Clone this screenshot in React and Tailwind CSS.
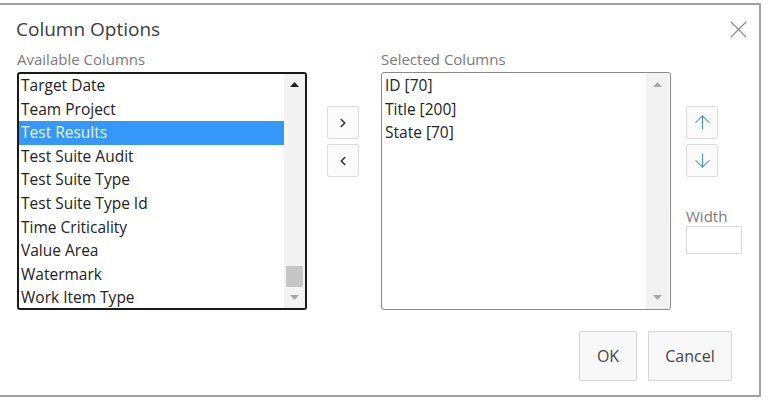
import { ChevronRight, ChevronLeft, ArrowUp, ArrowDown } from "lucide-react"

const available = [
  "Target Date",
  "Team Project",
  "Test Results",
  "Test Suite Audit",
  "Test Suite Type",
  "Test Suite Type Id",
  "Time Criticality",
  "Value Area",
  "Watermark",
  "Work Item Type",
]

const selected = ["ID [70]", "Title [200]", "State [70]"]

function Tri({ down, color }) {
  return (
    <svg width="9" height="5" viewBox="0 0 9 5">
      <polygon points={down ? "0,0 9,0 4.5,5" : "0,5 9,5 4.5,0"} fill={color} />
    </svg>
  )
}

function SmallButton({ children }) {
  return (
    <button className="w-[32px] h-[33px] flex items-center justify-center border border-[#dcdcdc] bg-[#fbfbfb] rounded-[2px]">
      {children}
    </button>
  )
}

export default function App() {
  return (
    <div
      className="w-[768px] h-[403px] bg-white pt-[3px] overflow-hidden"
      style={{ fontFamily: '"Open Sans", "Noto Sans", sans-serif' }}
    >
      <div className="w-[761px] h-[394px] border-y-2 border-r-2 border-[#a2a2a2] bg-white flex flex-col">
        {/* header */}
        <div className="flex items-center justify-between pl-[16px] pr-[12px] pt-[11px]">
          <h1 className="text-[19px] leading-[26px] text-[#3c3c3c]">Column Options</h1>
          <svg width="17" height="17" viewBox="0 0 17 17">
            <path d="M1 1 L16 16 M16 1 L1 16" stroke="#8c8c8c" strokeWidth="1.3" fill="none" />
          </svg>
        </div>

        {/* lists */}
        <div className="flex items-start pl-[17px] mt-[7px]">
          <div className="w-[290px]">
            <div className="text-[15px] leading-[20px] h-[20px] mb-[3px] text-[#7a7a7a]">Available Columns</div>
            <div className="h-[238px] border-2 border-[#1a1a1a] rounded-[3px] flex">
              <div className="flex-1 text-[15.5px] text-[#222]">
                {available.map((c) => (
                  <div
                    key={c}
                    className={`pl-[2px] leading-[23.6px] h-[23.6px] whitespace-nowrap ${
                      c === "Test Results" ? "bg-[#3597f7] text-[#eaf5ff]" : ""
                    }`}
                  >
                    {c}
                  </div>
                ))}
              </div>
              <div className="w-[21px] bg-[#f3f3f3] flex flex-col items-center justify-between py-[8px] relative">
                <Tri color="#1f1f1f" />
                <div className="absolute left-[2px] top-[192px] w-[17px] h-[21px] bg-[#c6c6c6]" />
                <Tri down color="#a6a6a6" />
              </div>
            </div>
          </div>

          <div className="ml-[20px] mt-[57px] flex flex-col gap-[5px]">
            <SmallButton>
              <ChevronRight size={14} strokeWidth={2.8} color="#333" />
            </SmallButton>
            <SmallButton>
              <ChevronLeft size={14} strokeWidth={2.8} color="#333" />
            </SmallButton>
          </div>

          <div className="ml-[22px] w-[290px]">
            <div className="text-[15px] leading-[20px] h-[20px] mb-[3px] text-[#7a7a7a]">Selected Columns</div>
            <div className="h-[238px] border border-[#8a8a8a] rounded-[3px] flex">
              <div className="flex-1 text-[15.5px] text-[#222] pt-[1px]">
                {selected.map((c) => (
                  <div key={c} className="pl-[3px] leading-[23.6px] h-[23.6px]">
                    {c}
                  </div>
                ))}
              </div>
              <div className="w-[23px] mr-[1px] bg-[#f2f2f2] flex flex-col items-center justify-between py-[9px]">
                <Tri color="#a8a8a8" />
                <Tri down color="#a8a8a8" />
              </div>
            </div>
          </div>

          <div className="ml-[15px] mt-[57px] flex flex-col">
            <div className="flex flex-col gap-[5px]">
              <SmallButton>
                <ArrowUp size={23} strokeWidth={1.1} color="#3d8fd3" />
              </SmallButton>
              <SmallButton>
                <ArrowDown size={23} strokeWidth={1.1} color="#3d8fd3" />
              </SmallButton>
            </div>
            <div className="mt-[29px] text-[15px] leading-[20px] text-[#7a7a7a]">Width</div>
            <input className="w-[56px] h-[28px] border border-[#d8d8d8] bg-white outline-none" />
          </div>
        </div>

        {/* footer */}
        <div className="flex justify-end gap-[11px] pr-[27px] mt-[21px]">
          <button className="w-[58px] h-[50px] border border-[#d6d6d6] bg-[#f8f8f8] rounded-[2px] text-[16px] text-[#444]">
            OK
          </button>
          <button className="w-[84px] h-[50px] border border-[#d6d6d6] bg-[#f8f8f8] rounded-[2px] text-[16px] text-[#444]">
            Cancel
          </button>
        </div>
      </div>
    </div>
  )
}
